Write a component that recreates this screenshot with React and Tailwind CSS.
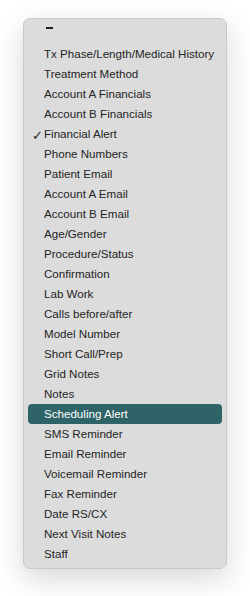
import React from "react";

const items = [
  "Tx Phase/Length/Medical History",
  "Treatment Method",
  "Account A Financials",
  "Account B Financials",
  "Financial Alert",
  "Phone Numbers",
  "Patient Email",
  "Account A Email",
  "Account B Email",
  "Age/Gender",
  "Procedure/Status",
  "Confirmation",
  "Lab Work",
  "Calls before/after",
  "Model Number",
  "Short Call/Prep",
  "Grid Notes",
  "Notes",
  "Scheduling Alert",
  "SMS Reminder",
  "Email Reminder",
  "Voicemail Reminder",
  "Fax Reminder",
  "Date RS/CX",
  "Next Visit Notes",
  "Staff",
];

const checked = "Financial Alert";
const active = "Scheduling Alert";

const App = () => {
  return (
    <div className="w-[250px] h-[596px] bg-white pt-[18px] pl-[23px]" style={{ fontFamily: "'Liberation Sans', Arial, sans-serif" }}>
      <div className="w-[204px] rounded-[7px] border border-[#c9c9c9] bg-[#dcdcdc] pb-[4px] shadow-[0_10px_30px_rgba(0,0,0,0.16)]">
        <div className="h-[25px] pl-[22px] pt-[8px]">
          <div className="w-[7px] h-[2px] bg-[#1e1e1e]" />
        </div>
        <ul className="flex flex-col">
          {items.map((item) => (
            <li
              key={item}
              className={
                item === active
                  ? "relative mx-[4px] h-[20px] rounded-[4px] bg-[#2e6467] pl-[16px] flex items-center whitespace-nowrap text-[11.6px] text-white"
                  : "relative mx-[4px] h-[20px] pl-[16px] flex items-center whitespace-nowrap text-[11.6px] text-[#242424]"
              }
            >
              {item === checked && (
                <span className="absolute left-[4px] top-[2px] text-[13px]" style={{ fontFamily: "'DejaVu Sans', sans-serif" }}>✓</span>
              )}
              {item}
            </li>
          ))}
        </ul>
      </div>
    </div>
  );
};

export default App;
